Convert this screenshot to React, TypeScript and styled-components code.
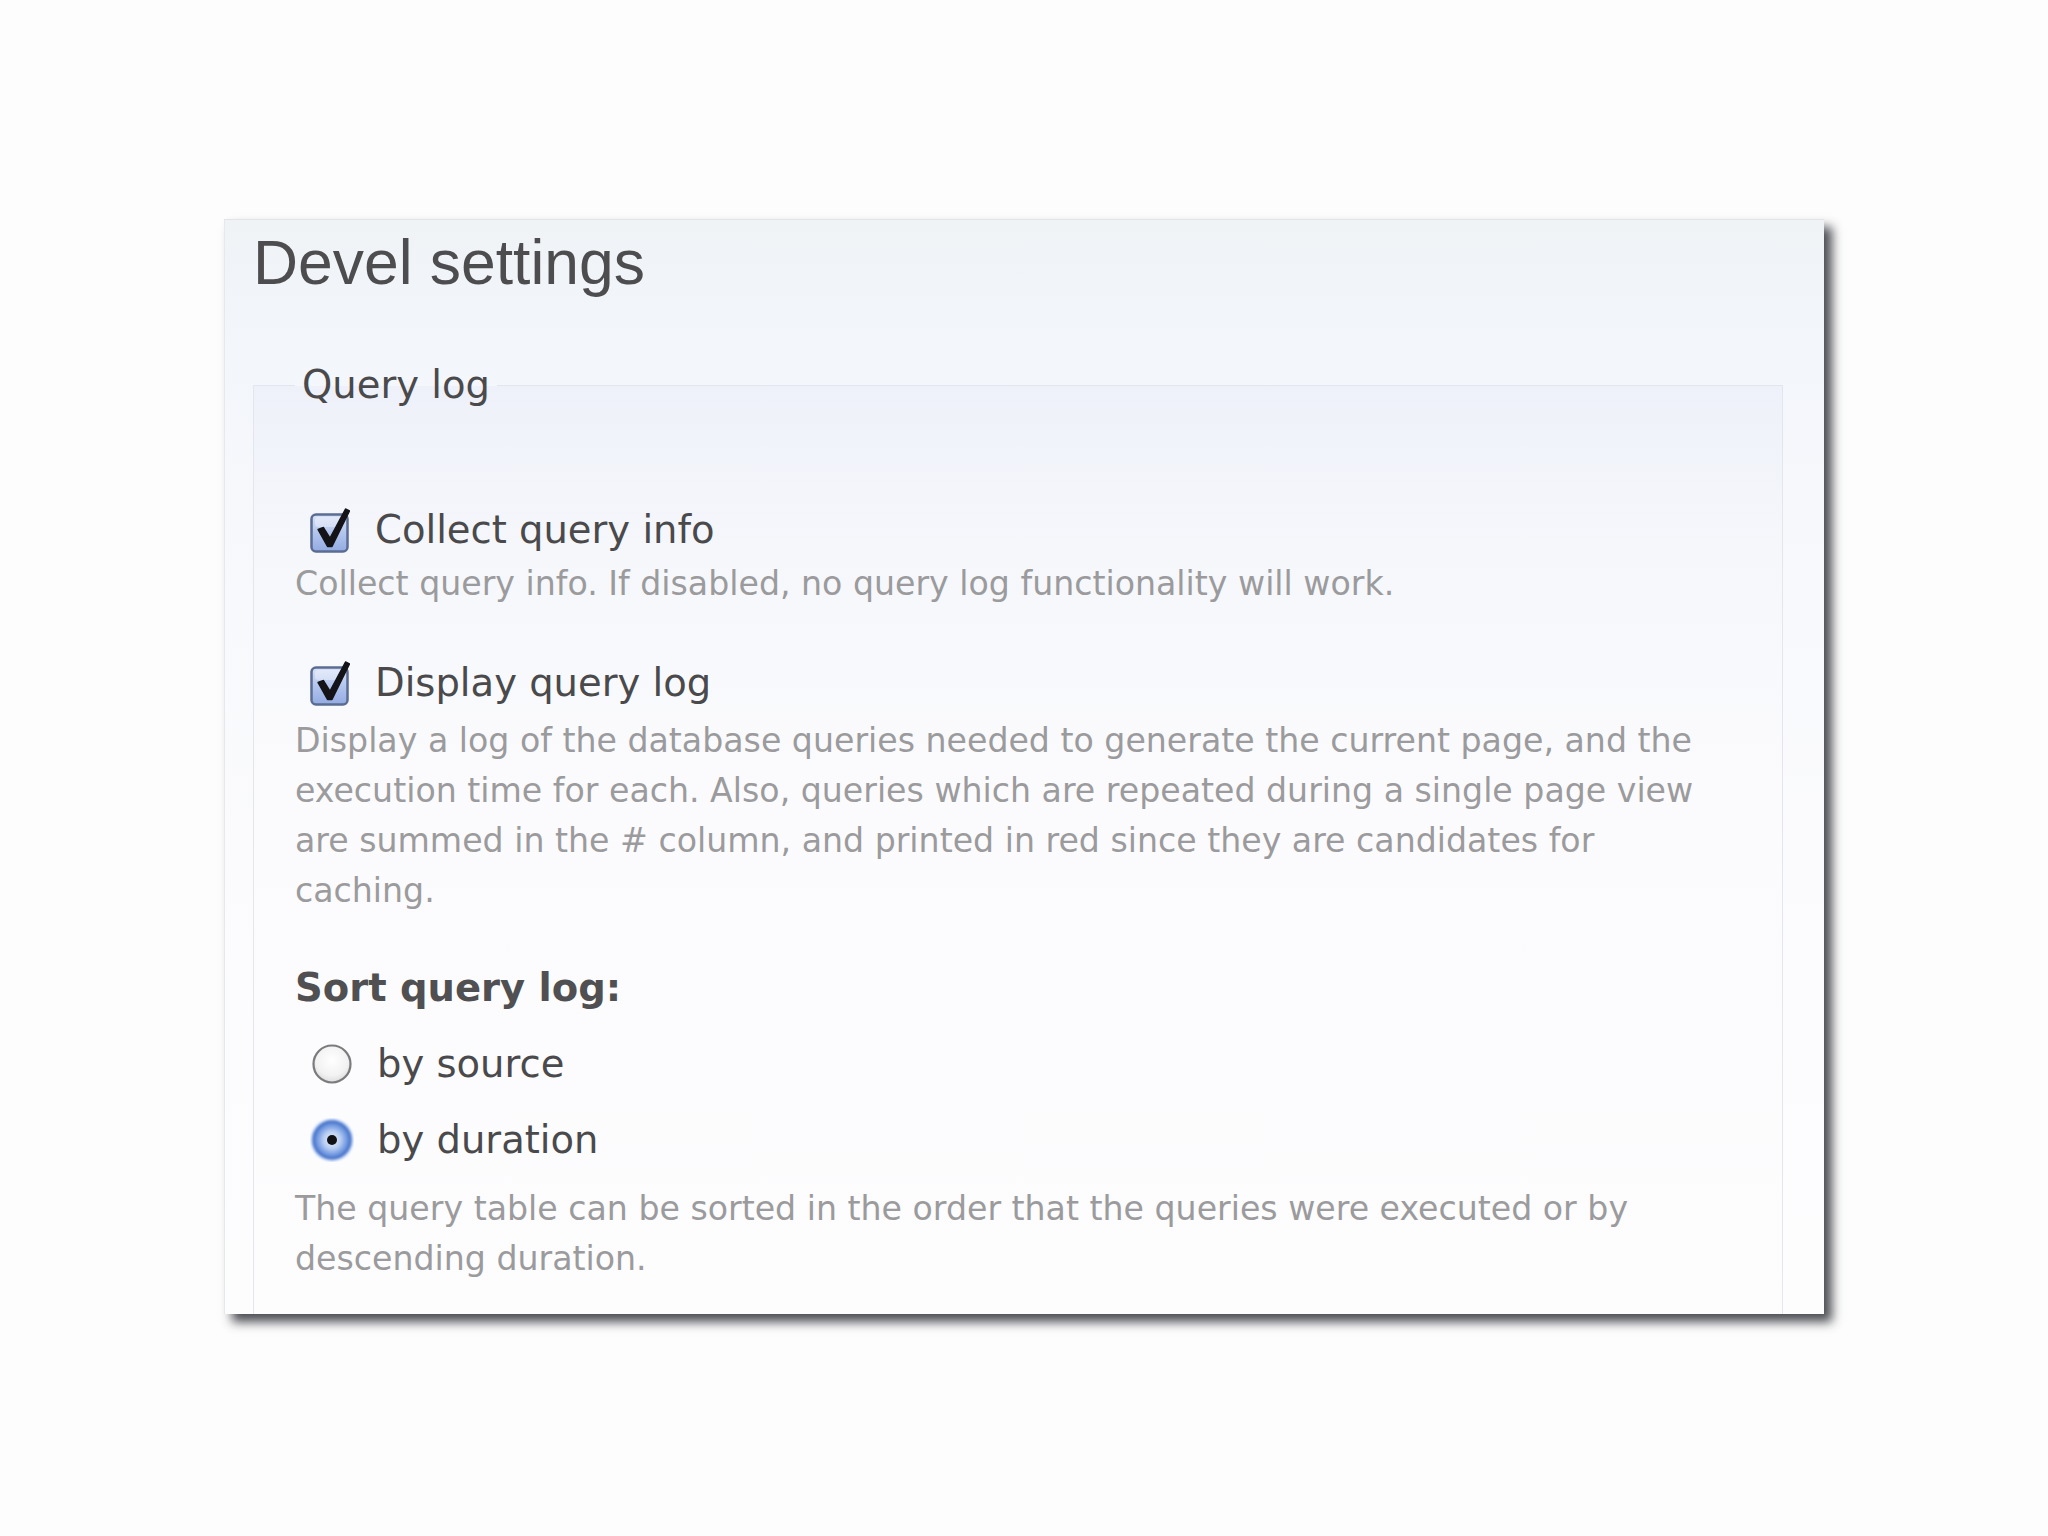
import React from "react";
import styled, { createGlobalStyle } from "styled-components";

const GlobalStyle = createGlobalStyle`
  html, body {
    margin: 0;
    padding: 0;
    background: #fdfdfd;
  }
  * { box-sizing: border-box; }
`;

const Page = styled.div`
  min-height: 1536px;
  padding-top: 219px;
  display: flex;
  justify-content: center;
`;

const Panel = styled.section`
  width: 1600px;
  height: 1095px;
  overflow: hidden;
  border-top: 1px solid #e2e4e8;
  border-left: 1px solid #e6e8ec;
  padding: 12px 41px 0 28px;
  background: linear-gradient(
    to bottom,
    #eff3f6 0%,
    #f3f6fb 12%,
    #f8f9fc 35%,
    #fcfcfe 70%,
    #fdfdfe 100%
  );
  box-shadow: 8px 8px 10px rgba(45, 47, 54, 0.85);
`;

const Title = styled.h1`
  margin: 0;
  font-family: "Liberation Sans", Arial, sans-serif;
  font-weight: normal;
  font-size: 62.4px;
  line-height: 62px;
  color: #4d4d4f;
`;

const Fieldset = styled.fieldset`
  margin: 68px 0 0 0;
  min-width: 0;
  border: 1px solid #e3e6ec;
  padding: 99px 40px 80px 41px;
  background: linear-gradient(
    to bottom,
    #eef1f9 0px,
    #f5f7fb 160px,
    #fbfbfd 400px,
    #fdfdfe 100%
  );
  font-family: "DejaVu Sans", Verdana, sans-serif;
`;

const Legend = styled.legend`
  padding: 0 7px;
  font-size: 38.5px;
  line-height: 46px;
  color: #4a4a4c;
`;

const FormItem = styled.div<{ $gap: number }>`
  display: flex;
  flex-direction: column;
  margin-top: ${(p) => p.$gap}px;
`;

const OptionRow = styled.label`
  display: flex;
  align-items: center;
  height: 46px;
  padding-left: 15px;
  gap: 25px;
  font-size: 38.5px;
  line-height: 46px;
  color: #4a4a4c;
  cursor: pointer;
`;

const RadioRow = styled(OptionRow)`
  gap: 23px;
  margin-top: 30px;
`;

const Description = styled.div<{ $gap: number }>`
  margin-top: ${(p) => p.$gap}px;
  font-size: 33.2px;
  line-height: 50px;
  color: #9b9b9d;
`;

const GroupTitle = styled.div`
  font-size: 38.5px;
  line-height: 46px;
  font-weight: bold;
  color: #505052;
`;

const CheckIcon = () => (
  <svg width="40" height="46" viewBox="0 0 40 46" aria-hidden="true">
    <defs>
      <linearGradient id="cbFill" x1="0" y1="0" x2="0" y2="1">
        <stop offset="0" stopColor="#d8e2f7" />
        <stop offset="0.5" stopColor="#b2c5ee" />
        <stop offset="1" stopColor="#93abe2" />
      </linearGradient>
    </defs>
    <rect x="1.5" y="7.5" width="36" height="37" rx="4.5" fill="url(#cbFill)" stroke="#5a6c93" strokeWidth="2.5" />
    <rect x="5" y="10" width="29" height="10" rx="3" fill="#ffffff" opacity="0.35" />
    <path
      d="M8 22.5 L13.5 20.5 L20 31 L35.5 2 L39.5 4 L22 39.5 L17.5 39.5 Z"
      fill="#141418"
      stroke="#141418"
      strokeWidth="1.4"
      strokeLinejoin="round"
    />
  </svg>
);

const RadioIcon = ({ checked }: { checked?: boolean }) =>
  checked ? (
    <svg width="44" height="44" viewBox="0 0 44 44" aria-hidden="true">
      <defs>
        <radialGradient id="rdOn" cx="0.5" cy="0.5" r="0.5">
          <stop offset="0" stopColor="#e4edfc" />
          <stop offset="0.45" stopColor="#bcd0f4" />
          <stop offset="0.8" stopColor="#7199e0" />
          <stop offset="1" stopColor="#4c78cf" />
        </radialGradient>
        <filter id="rdBlur" x="-20%" y="-20%" width="140%" height="140%">
          <feGaussianBlur stdDeviation="1.3" />
        </filter>
      </defs>
      <circle cx="22" cy="22" r="21.5" fill="#a9c4f0" opacity="0.75" filter="url(#rdBlur)" />
      <circle cx="22" cy="22" r="18.5" fill="url(#rdOn)" stroke="#4873c8" strokeWidth="2" filter="url(#rdBlur)" />
      <circle cx="22" cy="22" r="5" fill="#111216" />
    </svg>
  ) : (
    <svg width="44" height="44" viewBox="0 0 44 44" aria-hidden="true">
      <defs>
        <radialGradient id="rdOff" cx="0.5" cy="0.4" r="0.6">
          <stop offset="0" stopColor="#ffffff" />
          <stop offset="0.7" stopColor="#f2f2f2" />
          <stop offset="1" stopColor="#dcdcdc" />
        </radialGradient>
      </defs>
      <circle cx="22" cy="22" r="18.5" fill="url(#rdOff)" stroke="#7b7b7d" strokeWidth="2.2" />
    </svg>
  );

export default function App() {
  return (
    <>
      <GlobalStyle />
      <Page>
        <Panel>
          <Title>Devel settings</Title>
          <Fieldset>
            <Legend>Query log</Legend>

            <FormItem $gap={0}>
              <OptionRow>
                <CheckIcon />
                Collect query info
              </OptionRow>
              <Description $gap={6}>
                Collect query info. If disabled, no query log functionality will work.
              </Description>
            </FormItem>

            <FormItem $gap={51}>
              <OptionRow>
                <CheckIcon />
                Display query log
              </OptionRow>
              <Description $gap={10}>
                Display a log of the database queries needed to generate the current page, and the
                <br />
                execution time for each. Also, queries which are repeated during a single page view
                <br />
                are summed in the # column, and printed in red since they are candidates for
                <br />
                caching.
              </Description>
            </FormItem>

            <FormItem $gap={49}>
              <GroupTitle>Sort query log:</GroupTitle>
              <RadioRow>
                <RadioIcon />
                by source
              </RadioRow>
              <RadioRow>
                <RadioIcon checked />
                by duration
              </RadioRow>
              <Description $gap={21}>
                The query table can be sorted in the order that the queries were executed or by
                <br />
                descending duration.
              </Description>
            </FormItem>
          </Fieldset>
        </Panel>
      </Page>
    </>
  );
}
